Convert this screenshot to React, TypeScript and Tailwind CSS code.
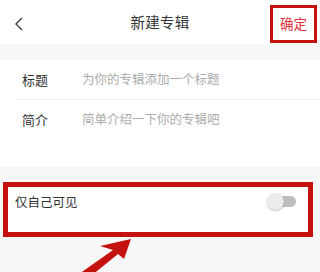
import React from "react";

export default function App() {
  const font = { fontFamily: '"Noto Sans CJK SC", "Noto Sans", sans-serif' };
  return (
    <div className="relative w-[320px] h-[272px] overflow-hidden bg-[#f7f7f7]" style={font}>
      {/* Header */}
      <div className="relative h-[44px] bg-white flex items-center justify-center">
        <svg className="absolute left-[13px] top-[16px]" width="12" height="16" viewBox="0 0 12 16">
          <path d="M9 2 L3 8 L9 14" fill="none" stroke="#333" strokeWidth="1.3" />
        </svg>
        <span className="text-[14.5px] text-[#333] leading-none tracking-[0.3px]">新建专辑</span>
        <div className="absolute left-[270px] top-[5px] w-[47px] h-[38px] border-[3.5px] border-[#c4120f] flex items-center justify-center">
          <span className="text-[13.5px] text-[#e0303a] leading-none">确定</span>
        </div>
      </div>

      {/* Form */}
      <div className="mt-[16px] bg-white h-[107px] flex flex-col">
        <div className="h-[39px] flex items-center pl-[22px]">
          <span className="w-[60px] text-[13px] text-[#333] leading-none">标题</span>
          <span className="text-[12.5px] text-[#ababab] leading-none">为你的专辑添加一个标题</span>
        </div>
        <div className="ml-[17px] h-px bg-[#efefef]" />
        <div className="h-[39px] flex items-center pl-[22px]">
          <span className="w-[60px] text-[13px] text-[#333] leading-none">简介</span>
          <span className="text-[12.5px] text-[#ababab] leading-none">简单介绍一下你的专辑吧</span>
        </div>
      </div>

      {/* Private toggle row */}
      <div className="mt-[15px] ml-[3px] w-[310px] h-[55px] border-[5px] border-[#c4120f] bg-white flex items-start justify-between pt-[7px] pl-[7px] pr-[12px]">
        <span className="text-[12.5px] text-[#333] leading-[16px]">仅自己可见</span>
        <div className="relative w-[29px] h-[17px] mt-[-1px]">
          <div className="absolute left-[4px] right-0 top-[3px] h-[11px] rounded-full bg-[#bdbdbd]" />
          <div className="absolute left-0 top-0 w-[17px] h-[17px] rounded-full bg-[#ececec] shadow-[0_1px_2px_rgba(0,0,0,0.25)]" />
        </div>
      </div>

      {/* Annotation arrow */}
      <svg className="absolute left-0 top-0" width="320" height="272" viewBox="0 0 320 272">
        <polygon
          points="131,239 100,246 113,250 79,274 86,280 118,254 124,259"
          fill="#c4120f"
        />
      </svg>
    </div>
  );
}
